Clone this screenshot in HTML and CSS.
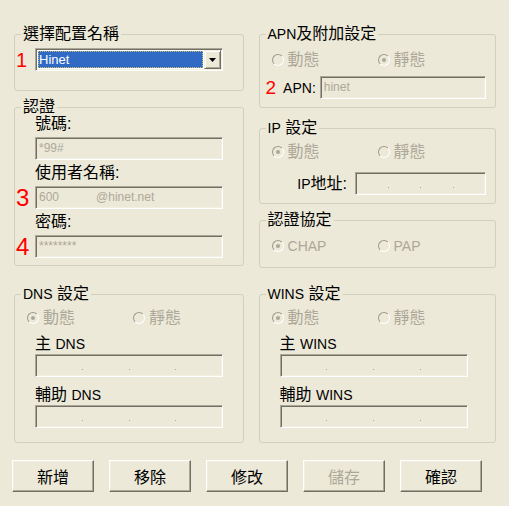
FILE: index.html
```html
<!DOCTYPE html>
<html lang="zh-Hant">
<head>
    <meta charset="UTF-8">
    <title>連線配置</title>
    <link rel="stylesheet" href="styles.css">
</head>
<body>
    <div class="dialog">
        <div class="top">
            <div class="col-left">
                <fieldset class="group g-profile">
                    <legend>選擇配置名稱</legend>
                    <div class="frow combo-row">
                        <span class="num n1">1</span>
                        <div class="combo">
                            <span class="combo-sel">Hinet</span>
                            <span class="combo-btn">
                                <svg width="7" height="4" viewBox="0 0 7 4"><path d="M0 0H7L3.5 4Z" fill="#000"/></svg>
                            </span>
                        </div>
                    </div>
                </fieldset>

                <fieldset class="group g-auth">
                    <legend>認證</legend>
                    <div class="lbl first">號碼:</div>
                    <div class="frow">
                        <span class="num"></span>
                        <div class="field wide">*99#</div>
                    </div>
                    <div class="lbl">使用者名稱:</div>
                    <div class="frow">
                        <span class="num n3">3</span>
                        <div class="field wide">600<span class="domain">@hinet.net</span></div>
                    </div>
                    <div class="lbl">密碼:</div>
                    <div class="frow">
                        <span class="num n3">4</span>
                        <div class="field wide">********</div>
                    </div>
                </fieldset>
            </div>

            <div class="col-right">
                <fieldset class="group g-apn">
                    <legend><span class="en">APN</span>及附加設定</legend>
                    <div class="radios">
                        <span class="opt"><span class="radio"></span>動態</span>
                        <span class="opt"><span class="radio on"></span>靜態</span>
                    </div>
                    <div class="apn-row">
                        <span class="num n2">2</span>
                        <span class="en apn-lbl">APN:</span>
                        <div class="field apn">hinet</div>
                    </div>
                </fieldset>

                <fieldset class="group g-ip">
                    <legend><span class="en">IP</span> 設定</legend>
                    <div class="radios">
                        <span class="opt"><span class="radio on"></span>動態</span>
                        <span class="opt"><span class="radio"></span>靜態</span>
                    </div>
                    <div class="ip-row">
                        <span><span class="en">IP</span>地址:</span>
                        <div class="field ipfield short">
                            <span class="oct"></span><span class="dot"></span>
                            <span class="oct"></span><span class="dot"></span>
                            <span class="oct"></span><span class="dot"></span>
                            <span class="oct"></span>
                        </div>
                    </div>
                </fieldset>

                <fieldset class="group g-proto">
                    <legend>認證協定</legend>
                    <div class="radios">
                        <span class="opt"><span class="radio on"></span><span class="en">CHAP</span></span>
                        <span class="opt"><span class="radio"></span><span class="en">PAP</span></span>
                    </div>
                </fieldset>
            </div>
        </div>

        <div class="bottom">
            <fieldset class="group g-dns">
                <legend><span class="en">DNS</span> 設定</legend>
                <div class="radios">
                    <span class="opt"><span class="radio on"></span>動態</span>
                    <span class="opt"><span class="radio"></span>靜態</span>
                </div>
                <div class="lbl">主 <span class="en">DNS</span></div>
                <div class="field ipfield wide indent">
                    <span class="oct"></span><span class="dot"></span>
                    <span class="oct"></span><span class="dot"></span>
                    <span class="oct"></span><span class="dot"></span>
                    <span class="oct"></span>
                </div>
                <div class="lbl">輔助 <span class="en">DNS</span></div>
                <div class="field ipfield wide indent">
                    <span class="oct"></span><span class="dot"></span>
                    <span class="oct"></span><span class="dot"></span>
                    <span class="oct"></span><span class="dot"></span>
                    <span class="oct"></span>
                </div>
            </fieldset>

            <fieldset class="group g-wins">
                <legend><span class="en">WINS</span> 設定</legend>
                <div class="radios">
                    <span class="opt"><span class="radio on"></span>動態</span>
                    <span class="opt"><span class="radio"></span>靜態</span>
                </div>
                <div class="lbl">主 <span class="en">WINS</span></div>
                <div class="field ipfield wide indent">
                    <span class="oct"></span><span class="dot"></span>
                    <span class="oct"></span><span class="dot"></span>
                    <span class="oct"></span><span class="dot"></span>
                    <span class="oct"></span>
                </div>
                <div class="lbl">輔助 <span class="en">WINS</span></div>
                <div class="field ipfield wide indent">
                    <span class="oct"></span><span class="dot"></span>
                    <span class="oct"></span><span class="dot"></span>
                    <span class="oct"></span><span class="dot"></span>
                    <span class="oct"></span>
                </div>
            </fieldset>
        </div>

        <div class="buttons">
            <button class="btn">新增</button>
            <button class="btn">移除</button>
            <button class="btn">修改</button>
            <button class="btn" disabled>儲存</button>
            <button class="btn">確認</button>
        </div>
    </div>
</body>
</html>
```

FILE: styles.css
```css
body {
    margin: 0;
    background: #ece9d8;
    font-family: "Liberation Sans", "Noto Sans CJK TC", sans-serif;
    font-size: 16px;
    line-height: 16px;
    color: #000;
}

.dialog {
    width: 509px;
    height: 506px;
    box-sizing: border-box;
    padding: 26px 13px 0 12px;
}

.top,
.bottom {
    display: flex;
    gap: 15px;
    padding-left: 2px;
}

.top {
    height: 242px;
}

.bottom {
    margin-top: 18px;
}

.col-left {
    width: 230px;
    display: flex;
    flex-direction: column;
    gap: 8px;
}

.col-right {
    width: 238px;
    display: flex;
    flex-direction: column;
}

.en {
    font-size: 14px;
}

/* group boxes */
.group {
    margin: 0;
    padding: 0;
    min-width: 0;
    border: 1px solid #d0d0bf;
    border-radius: 3px;
    box-sizing: border-box;
}

.group legend {
    margin-left: 6px;
    padding: 0 2px;
    line-height: 16px;
    height: 16px;
}

.g-profile { height: 65px; }
.g-auth { height: 167px; }
.g-apn { height: 82px; }
.g-ip { height: 84px; margin-top: 12px; }
.g-proto { height: 56px; margin-top: 8px; }
.g-dns { width: 230px; height: 157px; }
.g-wins { width: 238px; height: 157px; }

/* red step numbers */
.num {
    width: 20px;
    flex: none;
    padding-left: 1px;
    box-sizing: border-box;
    color: #f00;
    font-family: "Liberation Sans", sans-serif;
}

.n1 { font-size: 20px; }
.n2 { font-size: 19px; width: auto; padding: 0; }
.n3 { font-size: 24px; }

.frow {
    display: flex;
    align-items: center;
}

.combo-row {
    margin-top: 6px;
}

/* combo box */
.combo {
    width: 188px;
    height: 23px;
    box-sizing: border-box;
    padding: 1px;
    display: flex;
    background: #fff;
    border: 1px solid;
    border-color: #aca899 #fff #fff #aca899;
    box-shadow: inset 1px 1px 0 #716f64, inset -1px -1px 0 #f1efe2;
}

.combo-sel {
    flex: 1;
    margin: 1px;
    padding-left: 1px;
    background: #316ac5;
    color: #fff;
    font-size: 13px;
    line-height: 17px;
    outline: 1px dotted #c8c070;
    outline-offset: -1px;
}

.combo-btn {
    width: 17px;
    flex: none;
    display: flex;
    align-items: center;
    justify-content: center;
    background: #ece9d8;
    box-sizing: border-box;
    border: 1px solid;
    border-color: #f1efe2 #716f64 #716f64 #f1efe2;
    box-shadow: inset 1px 1px 0 #fff, inset -1px -1px 0 #aca899;
}

/* disabled text fields */
.field {
    height: 23px;
    box-sizing: border-box;
    padding-left: 3px;
    border: 1px solid;
    border-color: #aca899 #fff #fff #aca899;
    box-shadow: inset 1px 1px 0 #716f64, inset -1px -1px 0 #f1efe2;
    color: #aca899;
    font-size: 12px;
    line-height: 21px;
    white-space: nowrap;
}

.wide { width: 188px; }
.short { width: 131px; }
.apn { width: 166px; }

.frow .field.wide:first-child,
.indent {
    margin-left: 20px;
}

.domain {
    margin-left: 37px;
}

.ipfield {
    display: flex;
    padding: 0;
}

.oct {
    flex: 1;
}

.dot {
    width: 1px;
    height: 1px;
    margin-top: 14px;
    background: #aca899;
}

/* labels */
.lbl {
    height: 16px;
    margin: 5px 0 0 20px;
}

.lbl.first {
    margin-top: 1px;
}

.frow + .lbl,
.g-auth .frow {
    margin-top: 5px;
}

.g-dns .lbl,
.g-wins .lbl {
    margin-top: 10px;
}

.g-dns .field,
.g-wins .field {
    margin-top: 2px;
}

/* radio rows */
.radios {
    display: flex;
    align-items: center;
    height: 16px;
    padding-left: 12px;
    margin-top: 10px;
    color: #aca899;
}

.g-ip .radios,
.g-dns .radios,
.g-wins .radios {
    margin-top: 8px;
}

.opt {
    width: 106px;
    display: flex;
    align-items: center;
    gap: 4px;
}

.radio {
    width: 12px;
    height: 12px;
    box-sizing: border-box;
    border-radius: 50%;
    border: 1px solid;
    border-color: #9d9a8c #fff #fff #9d9a8c;
    background: #ece9d8;
    display: flex;
    align-items: center;
    justify-content: center;
}

.radio.on::after {
    content: "";
    width: 4px;
    height: 4px;
    border-radius: 50%;
    background: #aca899;
}

.apn-row {
    display: flex;
    align-items: center;
    margin-top: 8px;
    padding-left: 6px;
}

.apn-lbl {
    margin: 0 4px 0 7px;
}

.ip-row {
    display: flex;
    align-items: center;
    justify-content: flex-end;
    gap: 8px;
    margin-top: 12px;
    padding-right: 9px;
}

/* buttons */
.buttons {
    display: flex;
    gap: 15px;
    margin-top: 17px;
}

.btn {
    width: 82px;
    height: 32px;
    padding: 0;
    font-family: inherit;
    font-size: 16px;
    color: #000;
    background: #ece9d8;
    border: 1px solid;
    border-color: #fff #716f64 #716f64 #fff;
    box-shadow: inset -1px -1px 0 #aca899, inset 1px 1px 0 #f1efe2;
}

.btn:disabled {
    color: #aca899;
}
```
